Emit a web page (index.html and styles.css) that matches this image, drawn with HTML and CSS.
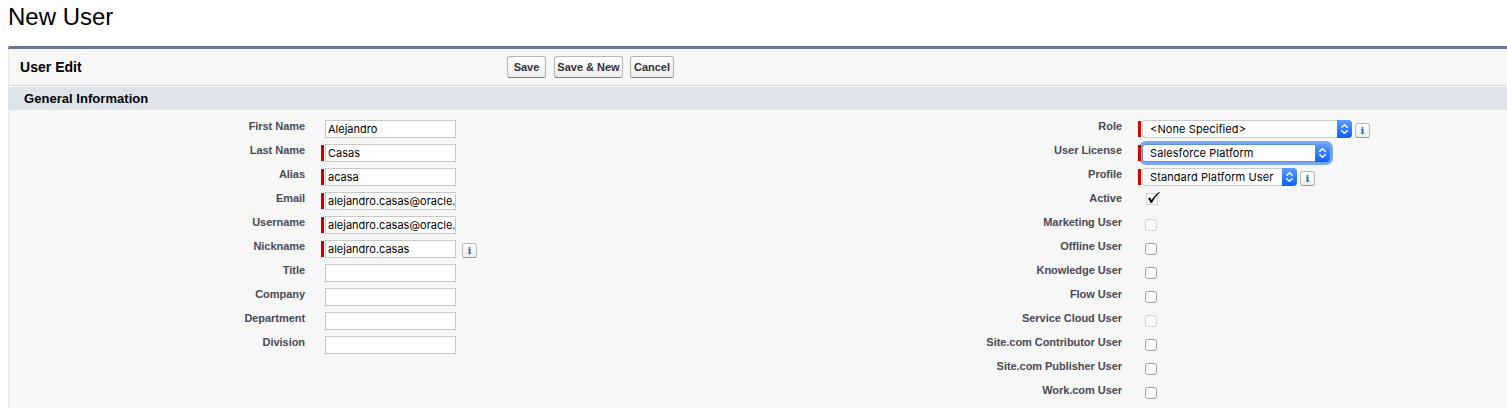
FILE: index.html
```
<!DOCTYPE html>
<html lang="en">
<head>
<meta charset="utf-8">
<title>New User</title>
<link rel="stylesheet" href="styles.css">
</head>
<body>
<svg class="defs" width="0" height="0">
  <symbol id="chevrons" viewBox="0 0 15 18"><path d="M4.8 7.3 7.5 4.7l2.7 2.6M4.8 10.7l2.7 2.6 2.7-2.6" fill="none" stroke="#fff" stroke-width="1.4" stroke-linecap="round" stroke-linejoin="round"/></symbol>
</svg>
<h1 class="page-title">New User</h1>
<main class="panel">
  <header class="toolbar">
    <h2 class="toolbar-title">User Edit</h2>
    <div class="actions">
      <button class="btn btn-save">Save</button>
      <button class="btn btn-new">Save &amp; New</button>
      <button class="btn btn-cancel">Cancel</button>
    </div>
  </header>
  <h3 class="section-title">General Information</h3>
  <form class="form">
    <div class="col-left">
      <div class="row"><label>First Name</label><div class="field"><div class="input">Alejandro</div></div></div>
      <div class="row"><label>Last Name</label><div class="field required"><div class="input">Casas</div></div></div>
      <div class="row"><label>Alias</label><div class="field required"><div class="input">acasa</div></div></div>
      <div class="row"><label>Email</label><div class="field required"><div class="input">alejandro.casas@oracle.</div></div></div>
      <div class="row"><label>Username</label><div class="field required"><div class="input">alejandro.casas@oracle.</div></div></div>
      <div class="row"><label>Nickname</label><div class="field required"><div class="input">alejandro.casas</div><span class="info info-input">i</span></div></div>
      <div class="row"><label>Title</label><div class="field"><div class="input"></div></div></div>
      <div class="row"><label>Company</label><div class="field"><div class="input"></div></div></div>
      <div class="row"><label>Department</label><div class="field"><div class="input"></div></div></div>
      <div class="row"><label>Division</label><div class="field"><div class="input"></div></div></div>
    </div>
    <div class="col-right">
      <div class="row"><label>Role</label><div class="field required"><div class="select select-role"><span>&lt;None Specified&gt;</span><svg class="arrow"><use href="#chevrons"/></svg></div><span class="info">i</span></div></div>
      <div class="row"><label>User License</label><div class="field required"><div class="select select-license focused"><span>Salesforce Platform</span><svg class="arrow"><use href="#chevrons"/></svg></div></div></div>
      <div class="row"><label>Profile</label><div class="field required"><div class="select select-profile"><span>Standard Platform User</span><svg class="arrow"><use href="#chevrons"/></svg></div><span class="info">i</span></div></div>
      <div class="row"><label>Active</label><div class="field"><svg class="checked" width="16" height="15" viewBox="0 0 16 15"><path d="M1.5 2.5h11v11h-11z" fill="none" stroke="#aaa" stroke-dasharray="1 1"/><path d="M3 7.6 4.8 6.4 6.6 9C9 5.3 11.5 2.4 14.7.7L15 1.2C11.8 3.8 9.1 7.5 7.1 11.7L5.6 12C4.9 10.3 4.1 8.9 3 7.6Z" fill="#000"/></svg></div></div>
      <div class="row"><label>Marketing User</label><div class="field"><span class="check disabled"></span></div></div>
      <div class="row"><label>Offline User</label><div class="field"><span class="check"></span></div></div>
      <div class="row"><label>Knowledge User</label><div class="field"><span class="check"></span></div></div>
      <div class="row"><label>Flow User</label><div class="field"><span class="check"></span></div></div>
      <div class="row"><label>Service Cloud User</label><div class="field"><span class="check disabled"></span></div></div>
      <div class="row"><label>Site.com Contributor User</label><div class="field"><span class="check"></span></div></div>
      <div class="row"><label>Site.com Publisher User</label><div class="field"><span class="check"></span></div></div>
      <div class="row"><label>Work.com User</label><div class="field"><span class="check"></span></div></div>
    </div>
  </form>
</main>
</body>
</html>
```
FILE: styles.css
```
* { box-sizing: border-box; }
body {
  margin: 0;
  height: 408px;
  overflow: hidden;
  background: #fff;
  font-family: "Liberation Sans", Arial, sans-serif;
  color: #000;
}
h1, h2, h3 { margin: 0; }
.defs { position: absolute; }
.page-title {
  height: 46px;
  padding: 3px 0 0 8px;
  font-size: 24px;
  line-height: 28px;
  font-weight: 400;
}
.panel {
  height: 362px;
  margin-left: 8px;
  border-top: 3px solid #6a7591;
  border-top-left-radius: 2px;
  background: #f7f7f7;
  box-shadow: inset 1px 0 0 #e6e6e8;
}
.toolbar {
  display: grid;
  grid-template-columns: 499px 1fr;
  height: 37px;
  border-bottom: 1px solid #d2d5d2;
}
.toolbar-title {
  padding: 10px 0 0 12px;
  font-size: 14px;
  line-height: 17px;
  letter-spacing: .03px;
}
.actions { display: flex; padding-top: 7px; }
.btn {
  height: 22px;
  padding: 0;
  border: 1px solid #b5b5b5;
  border-bottom-color: #7f7f7f;
  border-radius: 3px;
  background: linear-gradient(#fff, #ededed);
  font: bold 11px/18px "Liberation Sans", Arial, sans-serif;
  letter-spacing: 0;
  color: #333;
}
.btn-save { width: 39px; }
.btn-new { width: 69px; margin-left: 8px; }
.btn-cancel { width: 44px; margin-left: 7px; }
.section-title {
  height: 24px;
  padding: 3px 0 0 16px;
  border-top: 1px solid #fff;
  background: #dfe3ec;
  background-clip: padding-box;
  font-size: 13px;
  line-height: 17px;
  letter-spacing: .04px;
}
.form {
  display: grid;
  grid-template-columns: 817px 1fr;
  padding: 5px 0 0 1px;
}
.row { display: grid; grid-template-columns: 296px 1fr; height: 24px; }
label {
  padding-top: 5px;
  text-align: right;
  font-size: 11px;
  line-height: 13px;
  font-weight: 700;
  letter-spacing: -.05px;
  color: #4a4a56;
}
.field {
  display: flex;
  align-items: flex-start;
  padding: 5px 0 0 20px;
}
.required::before {
  content: "";
  position: relative;
  z-index: 1;
  width: 3px;
  height: 16px;
  margin: 1px 1px 0 -4px;
  background: #c00;
}
.input {
  width: 131px;
  height: 18px;
  padding: 0 2px;
  border: 1px solid #c8c8c8;
  background: #fff;
  font-family: Inter, sans-serif;
  font-size: 11px;
  line-height: 17px;
  white-space: nowrap;
  overflow: hidden;
}
.select {
  display: flex;
  justify-content: space-between;
  height: 18px;
  padding-left: 8px;
  border-radius: 4px;
  background: #fff;
  box-shadow: inset 0 0 0 1px #ccc, inset 0 -1px 0 #aaa;
  font-family: Inter, sans-serif;
  font-size: 11px;
  line-height: 18px;
  letter-spacing: .1px;
  white-space: nowrap;
}
.select-role { width: 210px; }
.select-license { width: 188px; }
.select-profile { width: 155px; }
.focused { box-shadow: 0 0 0 3px #79a6ee, inset 0 0 0 1px #5d8fdf; }
.arrow {
  width: 15px;
  height: 18px;
  border-radius: 0 4px 4px 0;
  background: linear-gradient(#5c9eff, #0c61fb);
}
.info {
  width: 15px;
  height: 15px;
  margin: 3px 0 0 3px;
  border: 1px solid #bbb;
  border-bottom-color: #999;
  border-radius: 3px;
  background: linear-gradient(#fff, #eceef0);
  text-align: center;
  font: bold 10px/13px "DejaVu Serif", serif;
  color: #1768b5;
}
.info-input { margin-left: 6px; }
.check {
  width: 12px;
  height: 12px;
  margin: 3px 0 0 3px;
  border: 1px solid #a0a0a0;
  border-radius: 3px;
  background: #fff;
}
.disabled { border-color: #d2d2d2; background: #fafafa; }
.checked { margin: -1px 0 0 3px; }
```
